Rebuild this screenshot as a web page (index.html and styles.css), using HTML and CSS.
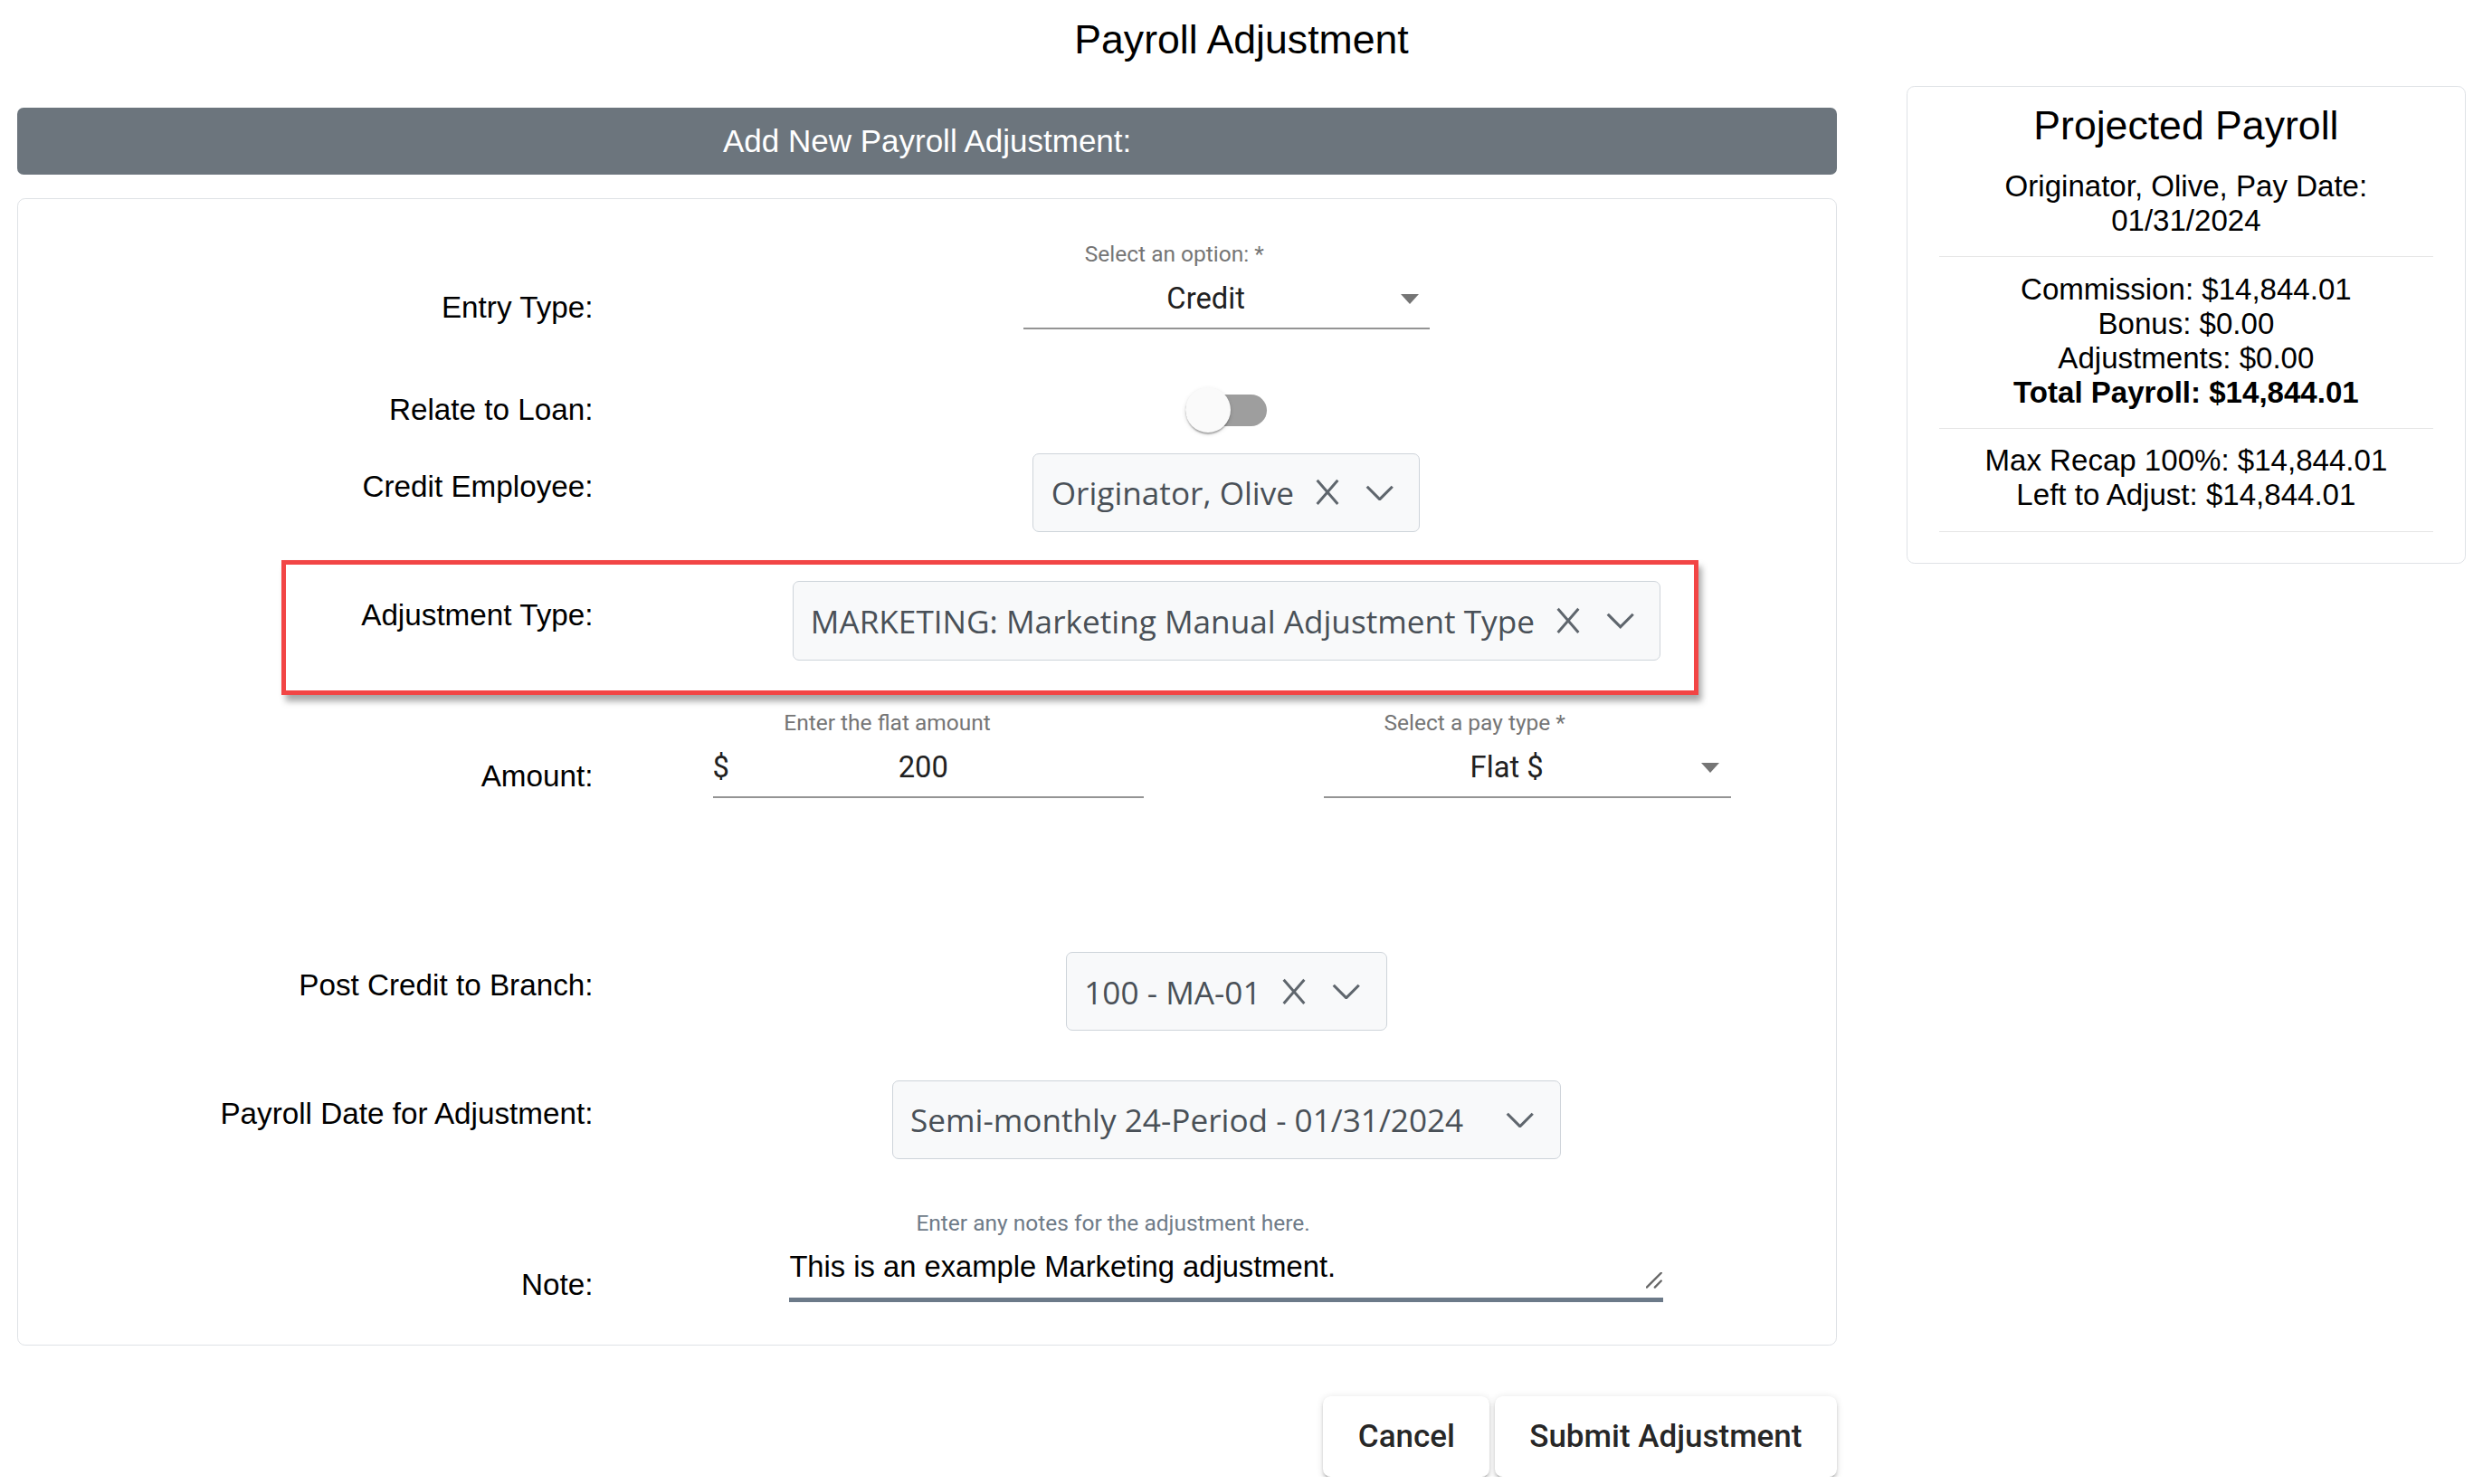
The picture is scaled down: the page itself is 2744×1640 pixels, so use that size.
FILE: index.html
```html
<!DOCTYPE html>
<html lang="en">
<head>
<meta charset="utf-8">
<title>Payroll Adjustment</title>
<link rel="stylesheet" href="styles.css">
</head>
<body>
<h1 class="page-title">Payroll Adjustment</h1>
<div class="layout">
  <main class="main-col">
    <div class="section-header">Add New Payroll Adjustment:</div>
    <form class="form-card">
      <div class="form-row row-mat">
        <label class="row-label">Entry Type:</label>
        <div class="row-control">
          <div class="mat-field field-select">
            <div class="mat-label label-entry">Select an option: *</div>
            <div class="mat-input">
              <span class="mat-value">Credit</span>
              <span class="mat-arrow-wrap"><span class="mat-arrow"></span></span>
            </div>
          </div>
        </div>
      </div>

      <div class="form-row row-toggle">
        <label class="row-label">Relate to Loan:</label>
        <div class="row-control">
          <span class="toggle"><span class="toggle-track"></span><span class="toggle-thumb"></span></span>
        </div>
      </div>

      <div class="form-row row-ng">
        <label class="row-label">Credit Employee:</label>
        <div class="row-control">
          <div class="ng-select">
            <span class="ng-value">Originator, Olive</span>
            <span class="ng-clear"><svg viewBox="0 0 16 17"><path d="M1.5 1 L14.5 16 M14.5 1 L1.5 16"/></svg></span>
            <span class="ng-arrow"><svg viewBox="0 0 18 10"><path d="M1 1 L9 9 L17 1"/></svg></span>
          </div>
        </div>
      </div>

      <div class="form-row row-ng">
        <label class="row-label">Adjustment Type:</label>
        <div class="row-control">
          <div class="ng-select">
            <span class="ng-value">MARKETING: Marketing Manual Adjustment Type</span>
            <span class="ng-clear"><svg viewBox="0 0 16 17"><path d="M1.5 1 L14.5 16 M14.5 1 L1.5 16"/></svg></span>
            <span class="ng-arrow"><svg viewBox="0 0 18 10"><path d="M1 1 L9 9 L17 1"/></svg></span>
          </div>
        </div>
      </div>

      <div class="form-row row-mat">
        <label class="row-label">Amount:</label>
        <div class="row-control amount-group">
          <div class="mat-field field-amount">
            <div class="mat-label label-amount">Enter the flat amount</div>
            <div class="mat-input">
              <span class="mat-prefix">$</span>
              <span class="mat-value">200</span>
            </div>
          </div>
          <div class="mat-field field-select">
            <div class="mat-label label-paytype">Select a pay type *</div>
            <div class="mat-input">
              <span class="mat-value">Flat $</span>
              <span class="mat-arrow-wrap"><span class="mat-arrow"></span></span>
            </div>
          </div>
        </div>
      </div>

      <div class="form-row row-ng row-gap-lg">
        <label class="row-label">Post Credit to Branch:</label>
        <div class="row-control">
          <div class="ng-select">
            <span class="ng-value">100 - MA-01</span>
            <span class="ng-clear"><svg viewBox="0 0 16 17"><path d="M1.5 1 L14.5 16 M14.5 1 L1.5 16"/></svg></span>
            <span class="ng-arrow"><svg viewBox="0 0 18 10"><path d="M1 1 L9 9 L17 1"/></svg></span>
          </div>
        </div>
      </div>

      <div class="form-row row-ng">
        <label class="row-label">Payroll Date for Adjustment:</label>
        <div class="row-control">
          <div class="ng-select">
            <span class="ng-value">Semi-monthly 24-Period - 01/31/2024</span>
            <span class="ng-arrow ng-arrow-solo"><svg viewBox="0 0 18 10"><path d="M1 1 L9 9 L17 1"/></svg></span>
          </div>
        </div>
      </div>

      <div class="form-row row-note">
        <label class="row-label">Note:</label>
        <div class="row-control">
          <div class="note-field">
            <div class="note-label">Enter any notes for the adjustment here.</div>
            <div class="note-box">
              <textarea class="note-input" rows="1">This is an example Marketing adjustment.</textarea>
              <svg class="note-resizer" viewBox="0 0 10 10"><path d="M9.6 0.4 L0.5 9.5 M9.6 5.4 L5.6 9.5"/></svg>
            </div>
          </div>
        </div>
      </div>

      <div class="highlight"></div>
    </form>
    <div class="actions">
      <button type="button" class="btn">Cancel</button>
      <button type="button" class="btn">Submit Adjustment</button>
    </div>
  </main>

  <aside class="side-card">
    <h2 class="side-title">Projected Payroll</h2>
    <div class="side-block">
      <div>Originator, Olive, Pay Date:</div>
      <div>01/31/2024</div>
    </div>
    <hr class="side-rule">
    <div class="side-block">
      <div>Commission: $14,844.01</div>
      <div>Bonus: $0.00</div>
      <div>Adjustments: $0.00</div>
      <div class="side-total">Total Payroll: $14,844.01</div>
    </div>
    <hr class="side-rule">
    <div class="side-block">
      <div>Max Recap 100%: $14,844.01</div>
      <div>Left to Adjust: $14,844.01</div>
    </div>
    <hr class="side-rule">
  </aside>
</div>
</body>
</html>
```

FILE: styles.css
```css
* {
  box-sizing: border-box;
}

html {
  zoom: 1.75;
}

body {
  margin: 0;
  font-family: "Liberation Sans", Arial, sans-serif;
  color: #000;
  background: #fff;
}

.page-title {
  margin: 0;
  padding-top: 10px;
  font-size: 25.5px;
  line-height: 30px;
  font-weight: 400;
  text-align: center;
}

.layout {
  display: flex;
  align-items: flex-start;
  gap: 44px;
  padding: 14px 11px 0;
}

.main-col {
  width: 1149px;
  flex: none;
  padding-top: 14px;
}

.section-header {
  height: 42px;
  line-height: 42px;
  background: #6c757d;
  color: #fff;
  font-size: 20px;
  text-align: center;
  border-radius: 4px;
}

.form-card {
  position: relative;
  margin: 15px 0 0;
  border: 1px solid #dfe2e6;
  border-radius: 5px;
  padding: 26.5px 0 26.5px;
}

.form-row {
  display: grid;
  grid-template-columns: 363px 1fr;
  column-gap: 15px;
  align-items: start;
}

.form-row + .form-row {
  margin-top: 31px;
}

.row-label {
  text-align: right;
  font-size: 19px;
  line-height: 22px;
  color: #000;
}

.row-mat .row-label {
  padding-top: 31.5px;
}

.row-ng .row-label {
  padding-top: 10.5px;
}

.form-row.row-toggle {
  align-items: center;
  margin-top: 36.7px;
}

.form-row.row-toggle + .row-ng {
  margin-top: 12.7px;
}

.form-row.row-gap-lg {
  margin-top: 97px;
}

.form-row.row-note {
  margin-top: 32px;
}

.row-note .row-label {
  padding-top: 36.5px;
}

.row-control {
  display: flex;
  justify-content: center;
}

/* material style fields */
.mat-field {
  display: flex;
  flex-direction: column;
  font-family: Roboto, "Liberation Sans", sans-serif;
}

.field-select {
  width: 257px;
}

.field-amount {
  width: 272px;
}

.mat-label {
  font-size: 14px;
  line-height: 17px;
  color: #757575;
  white-space: nowrap;
}

.label-entry {
  padding-left: 39px;
}

.label-paytype {
  padding-left: 38px;
}

.label-amount {
  padding-left: 45px;
}

.mat-input {
  display: flex;
  align-items: center;
  height: 30.5px;
  margin-top: 8.5px;
  padding-bottom: 7px;
  border-bottom: 1.5px solid #949494;
}

.mat-value {
  flex: 1;
  text-align: center;
  font-size: 18.7px;
  line-height: 22px;
  color: #212121;
}

.mat-prefix {
  width: 12px;
  font-size: 18.7px;
  line-height: 22px;
  color: #212121;
}

.field-amount .mat-value {
  padding-right: 18px;
}

.mat-arrow-wrap {
  width: 26px;
  display: flex;
  justify-content: center;
}

.mat-arrow {
  width: 0;
  height: 0;
  border-left: 6px solid transparent;
  border-right: 6px solid transparent;
  border-top: 6.5px solid #757575;
}

.amount-group {
  gap: 114px;
  padding-right: 6px;
}

/* toggle */
.toggle {
  position: relative;
  display: block;
  width: 51.5px;
  height: 28.6px;
}

.toggle-track {
  position: absolute;
  left: 0;
  right: 0;
  top: 4.3px;
  height: 20px;
  border-radius: 10px;
  background: #9e9e9e;
}

.toggle-thumb {
  position: absolute;
  left: 0;
  top: 0;
  width: 28.6px;
  height: 28.6px;
  border-radius: 50%;
  background: #fafafa;
  box-shadow: 0 2px 1px -1px rgba(0, 0, 0, .2), 0 1px 1px 0 rgba(0, 0, 0, .14), 0 1px 3px 0 rgba(0, 0, 0, .12);
}

/* ng-select style boxes */
.ng-select {
  display: inline-flex;
  align-items: center;
  height: 50px;
  padding: 0 16px 0 11px;
  background: #f8f9fa;
  border: 1px solid #ced4da;
  border-radius: 4px;
  font-family: "Open Sans", "Noto Sans", sans-serif;
  font-size: 20.1px;
  color: #495057;
}

.ng-value {
  margin-right: 13px;
  white-space: nowrap;
}

.ng-clear {
  display: flex;
  width: 16px;
  height: 17px;
}

.ng-clear svg {
  width: 16px;
  height: 17px;
  fill: none;
  stroke: #5f666d;
  stroke-width: 1.7;
}

.ng-arrow {
  display: flex;
  justify-content: flex-end;
  width: 34px;
}

.ng-arrow svg {
  width: 18px;
  height: 10px;
  fill: none;
  stroke: #5f666d;
  stroke-width: 1.8;
}

.ng-arrow-solo {
  width: 32px;
}

/* note */
.note-field {
  display: flex;
  flex-direction: column;
  width: 552px;
}

.note-label {
  padding-left: 80px;
  font-family: Roboto, "Liberation Sans", sans-serif;
  font-size: 14px;
  line-height: 17px;
  color: #6f7b88;
  white-space: nowrap;
}

.note-box {
  position: relative;
  margin-top: 8px;
}

.note-input {
  display: block;
  width: 100%;
  height: 33px;
  margin: 0;
  padding: 0;
  border: 0;
  border-bottom: 3px solid #6c7a89;
  background: transparent;
  font-family: "Liberation Sans", Arial, sans-serif;
  font-size: 18.7px;
  line-height: 22px;
  color: #000;
  resize: none;
  outline: none;
  overflow: hidden;
}

.note-resizer {
  position: absolute;
  right: 1px;
  bottom: 8.5px;
  width: 10px;
  height: 10px;
  fill: none;
  stroke: #666;
  stroke-width: 1.3;
  stroke-linecap: round;
}

/* annotation highlight */
.highlight {
  position: absolute;
  left: 166px;
  top: 228px;
  width: 895px;
  height: 85px;
  border: 3px solid #f24545;
  box-shadow: 2px 4px 4px rgba(0, 0, 0, .35);
  pointer-events: none;
}

/* buttons */
.actions {
  display: flex;
  justify-content: flex-end;
  gap: 3px;
  margin-top: 32px;
}

.btn {
  height: 51px;
  padding: 0 22px;
  border: 0;
  border-radius: 5px;
  background: #fff;
  color: rgba(0, 0, 0, .87);
  font-family: Roboto, "Liberation Sans", sans-serif;
  font-weight: 500;
  font-size: 20px;
  box-shadow: 0 3px 1px -2px rgba(0, 0, 0, .2), 0 2px 2px 0 rgba(0, 0, 0, .14), 0 1px 5px 0 rgba(0, 0, 0, .12);
  cursor: pointer;
}

/* side card */
.side-card {
  width: 353px;
  flex: none;
  padding: 10px 20px 10px;
  border: 1px solid #dfe2e6;
  border-radius: 5px;
  text-align: center;
}

.side-title {
  margin: 0 0 12.15px;
  font-size: 25.5px;
  line-height: 30px;
  font-weight: 400;
}

.side-block {
  font-size: 18.9px;
  line-height: 21.7px;
}

.side-total {
  font-weight: 700;
}

.side-rule {
  margin: 11.7px 0 9.4px;
  border: 0;
  border-top: 1px solid #e6e6e6;
}
```
